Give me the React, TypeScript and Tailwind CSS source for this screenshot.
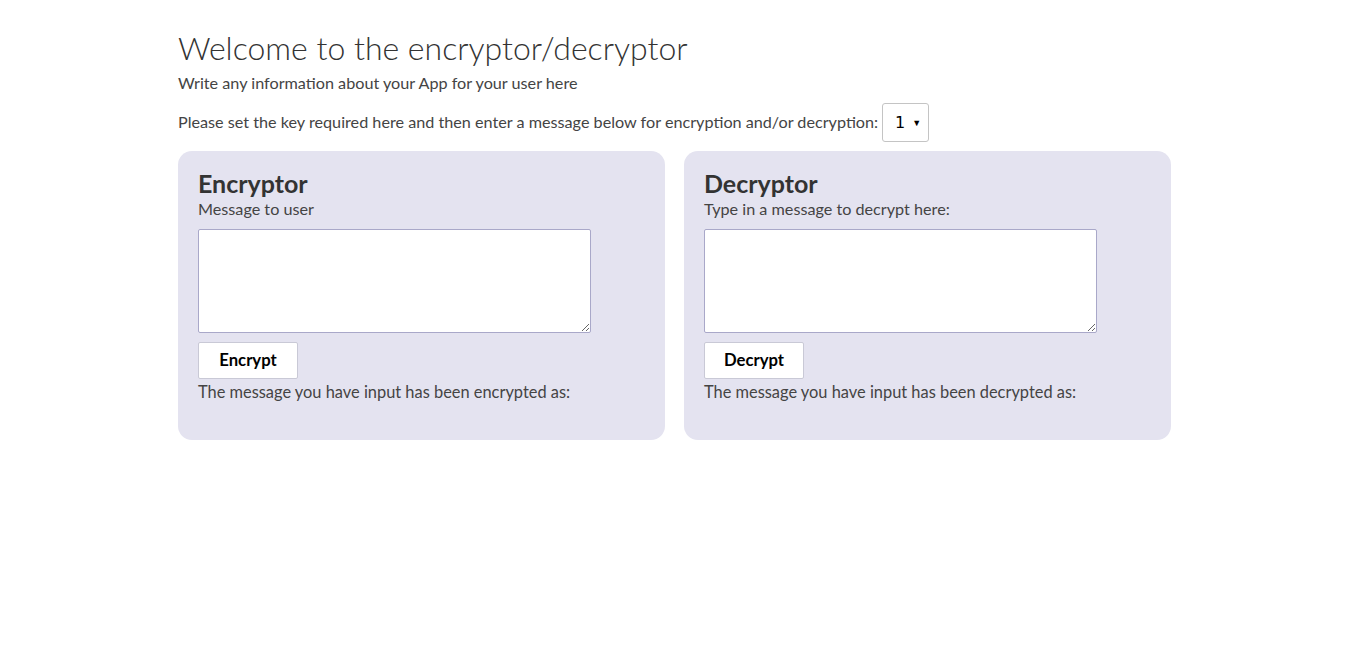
import { useState } from "react";

function Panel({
  title,
  label,
  button,
  result,
}: {
  title: string;
  label: string;
  button: string;
  result: string;
}) {
  const [text, setText] = useState("");
  return (
    <div className="w-[487px] h-[289px] bg-[#e4e3f0] rounded-[14px] px-5 pt-[18px]">
      <h2 className="text-[25px] font-bold leading-[28px] text-[#333]">{title}</h2>
      <p className="text-[16.2px] leading-[20px] mt-[2px] text-[#444]">{label}</p>
      <textarea
        className="block mt-[10px] w-[393px] h-[104px] bg-white border border-[#a9a8c9] rounded-[2px] p-1 text-[15px]"
        value={text}
        onChange={(e) => setText(e.target.value)}
      ></textarea>
      <button className="mt-[9px] w-[100px] h-[37px] bg-white border border-[#c9c9d6] rounded-[2px] text-[16.7px] font-bold text-black">
        {button}
      </button>
      <p className="text-[16.4px] leading-[20px] mt-[3px] text-[#444]">{result}</p>
    </div>
  );
}

export default function App() {
  return (
    <div className="min-h-screen bg-white font-['Lato',sans-serif] text-[#444]">
      <div className="w-[993px] ml-[178px] pt-[28px]">
        <h1 className="text-[32px] font-light leading-[40px] text-[#333]">
          Welcome to the encryptor/decryptor
        </h1>
        <p className="text-[16.2px] leading-[20px] mt-[5px]">
          Write any information about your App for your user here
        </p>
        <div className="flex items-center mt-[10px]">
          <span className="text-[16.2px]">
            Please set the key required here and then enter a message below for encryption and/or decryption:
          </span>
          <div className="ml-[4px] w-[47px] h-[39px] border border-[#c4c4c4] rounded-[3px] bg-white flex items-center justify-between pl-[12px] pr-[7px]">
            <span className="text-[16px] text-black font-['DejaVu_Sans',sans-serif]">1</span>
            <span className="text-[9px] text-black">▼</span>
          </div>
        </div>
        <div className="flex gap-[19px] mt-[9px]">
          <Panel
            title="Encryptor"
            label="Message to user"
            button="Encrypt"
            result="The message you have input has been encrypted as:"
          />
          <Panel
            title="Decryptor"
            label="Type in a message to decrypt here:"
            button="Decrypt"
            result="The message you have input has been decrypted as:"
          />
        </div>
      </div>
    </div>
  );
}
